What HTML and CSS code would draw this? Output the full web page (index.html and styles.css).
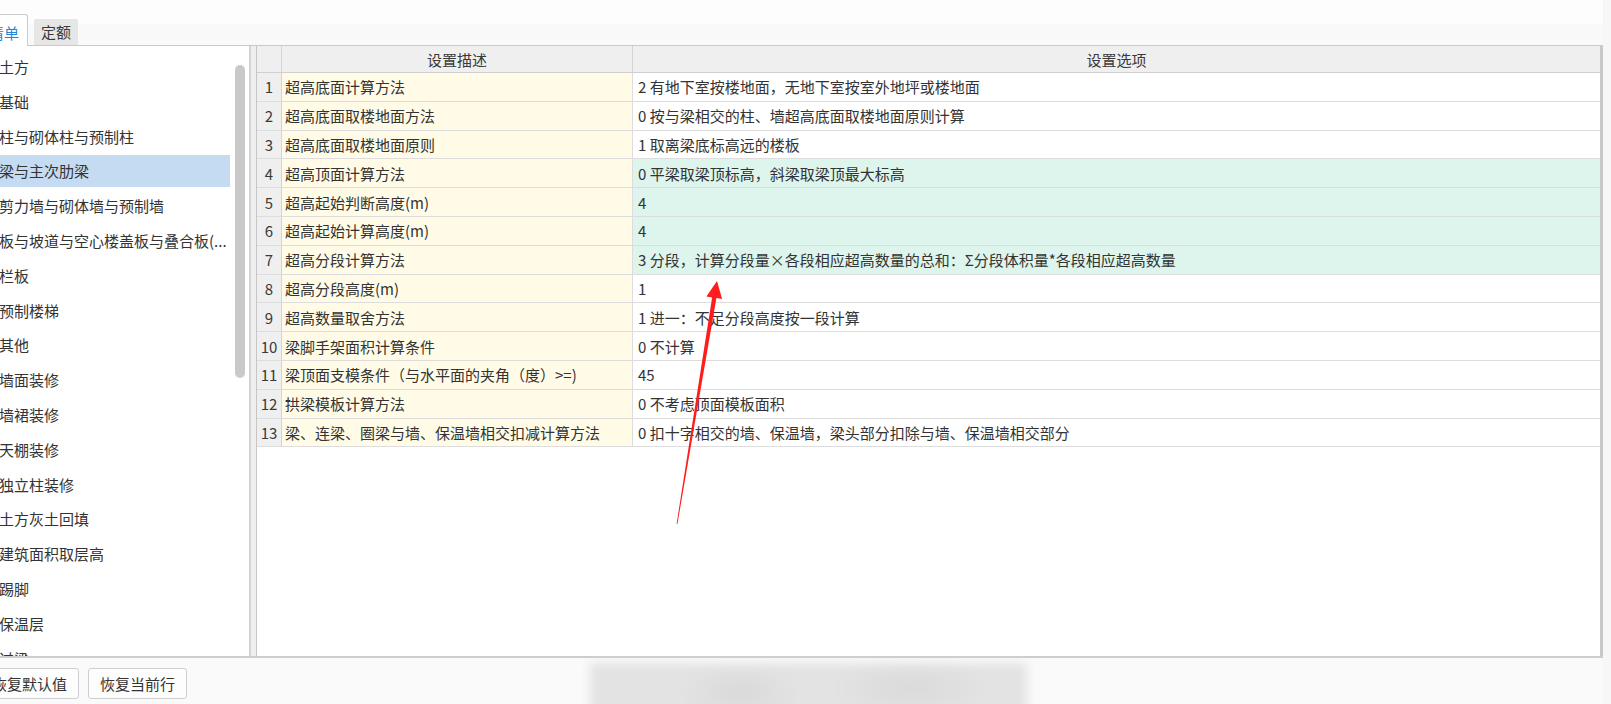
FILE: index.html
```html
<!DOCTYPE html>
<html lang="zh-CN">
<head>
<meta charset="utf-8">
<title>设置</title>
<link rel="stylesheet" href="styles.css">
</head>
<body>
<div class="app">
  <div class="tabs">
    <div class="tab tab-active">清单</div>
    <div class="tab">定额</div>
  </div>
  <div class="main">
    <div class="side">
      <ul class="list">
        <li class="item">土方</li>
        <li class="item">基础</li>
        <li class="item">柱与砌体柱与预制柱</li>
        <li class="item item-sel">梁与主次肋梁</li>
        <li class="item">剪力墙与砌体墙与预制墙</li>
        <li class="item">板与坡道与空心楼盖板与叠合板(...</li>
        <li class="item">栏板</li>
        <li class="item">预制楼梯</li>
        <li class="item">其他</li>
        <li class="item">墙面装修</li>
        <li class="item">墙裙装修</li>
        <li class="item">天棚装修</li>
        <li class="item">独立柱装修</li>
        <li class="item">土方灰土回填</li>
        <li class="item">建筑面积取层高</li>
        <li class="item">踢脚</li>
        <li class="item">保温层</li>
        <li class="item">过梁</li>
      </ul>
      <div class="track"><div class="thumb"></div></div>
    </div>
    <div class="split"></div>
    <div class="grid-panel">
      <div class="grid">
        <div class="hc hnum"></div>
        <div class="hc">设置描述</div>
        <div class="hc hlast">设置选项</div>

        <div class="c num">1</div><div class="c desc">超高底面计算方法</div><div class="c opt">2 有地下室按楼地面，无地下室按室外地坪或楼地面</div>
        <div class="c num">2</div><div class="c desc">超高底面取楼地面方法</div><div class="c opt">0 按与梁相交的柱、墙超高底面取楼地面原则计算</div>
        <div class="c num">3</div><div class="c desc">超高底面取楼地面原则</div><div class="c opt">1 取离梁底标高远的楼板</div>
        <div class="c num">4</div><div class="c desc">超高顶面计算方法</div><div class="c opt green">0 平梁取梁顶标高，斜梁取梁顶最大标高</div>
        <div class="c num">5</div><div class="c desc">超高起始判断高度(m)</div><div class="c opt green">4</div>
        <div class="c num">6</div><div class="c desc">超高起始计算高度(m)</div><div class="c opt green">4</div>
        <div class="c num">7</div><div class="c desc">超高分段计算方法</div><div class="c opt green">3 分段，计算分段量×各段相应超高数量的总和：Σ分段体积量*各段相应超高数量</div>
        <div class="c num">8</div><div class="c desc">超高分段高度(m)</div><div class="c opt">1</div>
        <div class="c num">9</div><div class="c desc">超高数量取舍方法</div><div class="c opt">1 进一：不足分段高度按一段计算</div>
        <div class="c num">10</div><div class="c desc">梁脚手架面积计算条件</div><div class="c opt">0 不计算</div>
        <div class="c num">11</div><div class="c desc">梁顶面支模条件（与水平面的夹角（度）&gt;=)</div><div class="c opt">45</div>
        <div class="c num">12</div><div class="c desc">拱梁模板计算方法</div><div class="c opt">0 不考虑顶面模板面积</div>
        <div class="c num">13</div><div class="c desc">梁、连梁、圈梁与墙、保温墙相交扣减计算方法</div><div class="c opt">0 扣十字相交的墙、保温墙，梁头部分扣除与墙、保温墙相交部分</div>
      </div>
    </div>
  </div>
  <div class="footer">
    <button class="btn">恢复默认值</button>
    <button class="btn">恢复当前行</button>
    <div class="blur"></div>
  </div>
</div>
<svg class="arrow" width="1611" height="704" viewBox="0 0 1611 704">
  <polygon points="676.6,523.9 712.1,297.4 706.4,296.5 717,281 722.1,299.1 716.4,298.1 677.4,524.1" fill="#ff1c1c"/>
</svg>
</body>
</html>
```

FILE: styles.css
```css
* { box-sizing: border-box; }

html, body {
  margin: 0;
  padding: 0;
}

body {
  width: 1611px;
  height: 704px;
  overflow: hidden;
  position: relative;
  background: #f7f7f7;
  font-family: "Noto Sans CJK SC", "Microsoft YaHei", sans-serif;
  font-size: 15px;
  color: #333;
}

.app {
  margin-left: -20px;
  width: 1623px;
  height: 704px;
  display: flex;
  flex-direction: column;
  background: #fcfcfc;
}

/* tabs */
.tabs {
  height: 45px;
  display: flex;
  align-items: flex-end;
  gap: 6px;
  background: linear-gradient(#fdfdfd 0, #fdfdfd 24px, #f9f9f9 25px, #f9f9f9 100%);
}

.tab {
  height: 26px;
  line-height: 26px;
  padding: 0 7px;
  background: #e6e6e6;
  border-radius: 2px 2px 0 0;
  color: #3a3a3a;
  font-size: 15px;
}

.tab-active {
  position: relative;
  z-index: 1;
  height: 32px;
  margin-bottom: -1px;
  padding: 4px 8px 0;
  line-height: 28px;
  background: #fff;
  border: 1px solid #cbcbcb;
  border-bottom: none;
  border-radius: 3px 3px 0 0;
  color: #2584d8;
}

/* main area */
.main {
  height: 613px;
  display: flex;
  border-top: 1px solid #c9c9c9;
  border-bottom: 2px solid #cdcdcd;
}

.side {
  width: 270px;
  display: flex;
  background: #fff;
  border-right: 1px solid #d2d2d2;
}

.list {
  list-style: none;
  margin: 0;
  padding: 5px 0 0;
  width: 250px;
  overflow: hidden;
}

.item {
  height: 32px;
  line-height: 32px;
  margin-bottom: 2.8px;
  padding-left: 19px;
  white-space: nowrap;
  overflow: hidden;
  color: #333;
}

.item-sel {
  background: #c5dbf1;
}

.track {
  width: 19px;
  padding: 19px 4px 0 5px;
}

.thumb {
  width: 10px;
  height: 313px;
  border-radius: 5px;
  background: #c9c9c9;
}

.split {
  width: 6px;
  background: #eeeeee;
  border-left: 1px solid #d6d6d6;
}

.grid-panel {
  width: 1347px;
  background: #fff;
  border-left: 1px solid #c6c6c6;
  border-right: 3px solid #c8c8c8;
}

.grid {
  display: grid;
  grid-template-columns: 25px 351px 1fr;
  grid-template-rows: 27px repeat(13, 28.8px);
}

.hc {
  display: flex;
  align-items: center;
  justify-content: center;
  background: #efefef;
  border-right: 1px solid #d4d4d4;
  border-bottom: 1px solid #d0d0d0;
  color: #3a3a3a;
  white-space: nowrap;
}

.hlast {
  border-right: none;
}

.c {
  display: flex;
  align-items: center;
  border-right: 1px solid #dddddd;
  border-bottom: 1px solid #dddddd;
  white-space: nowrap;
  overflow: hidden;
  color: #333;
}

.num {
  justify-content: center;
  background: #efefef;
  border-right-color: #d4d4d4;
  color: #3a3a3a;
}

.desc {
  padding-left: 3px;
  background: #fffbe6;
}

.opt {
  padding-left: 5px;
  background: #fff;
  border-right: none;
}

.green {
  background: #ddf5ec;
}

/* footer */
.footer {
  position: relative;
  flex: 1;
  display: flex;
  align-items: flex-start;
  gap: 9px;
  padding-top: 10px;
  background: #fafafa;
}

.btn {
  position: relative;
  z-index: 1;
  width: 99px;
  height: 31px;
  padding: 0;
  font-family: inherit;
  font-size: 15px;
  color: #333;
  background: #fdfdfd;
  border: 1px solid #cfcfcf;
  border-radius: 3px;
}

.blur {
  position: absolute;
  left: 610px;
  top: 5px;
  width: 437px;
  height: 60px;
  background:
    radial-gradient(ellipse 60px 30px at 150px 30px, #d9d9d9, transparent),
    radial-gradient(ellipse 80px 30px at 320px 25px, #dadada, transparent),
    #e3e3e3;
  filter: blur(5px);
}

.arrow {
  position: absolute;
  left: 0;
  top: 0;
  pointer-events: none;
}
```
